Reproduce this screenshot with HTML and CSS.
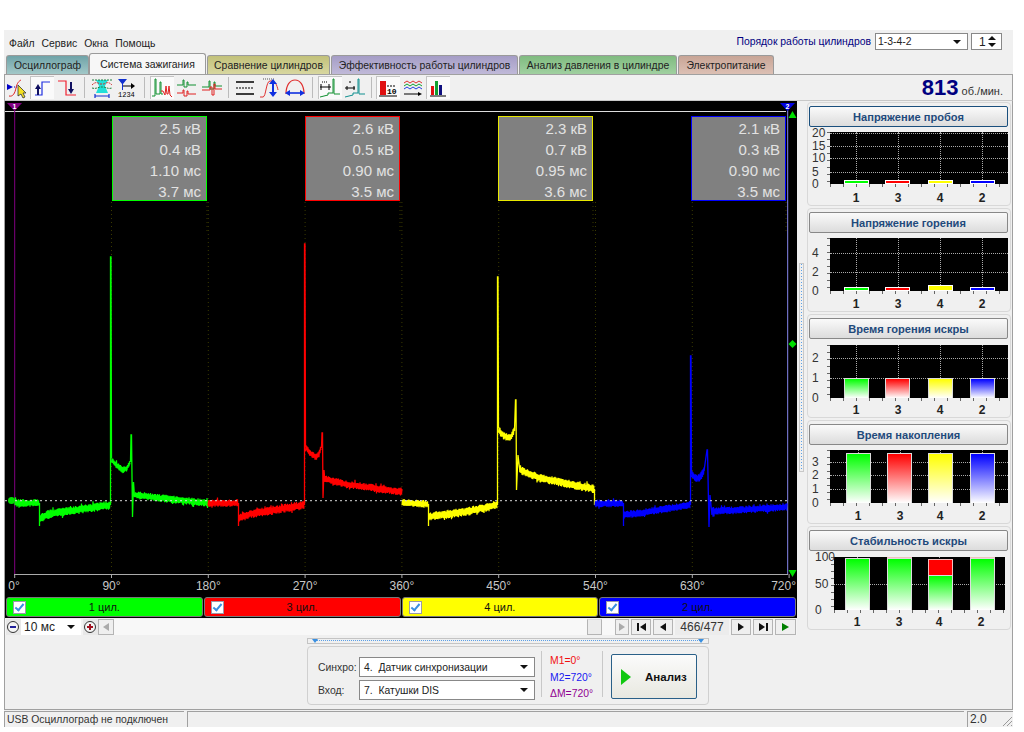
FILE: index.html

```html
<!DOCTYPE html>
<html lang="ru">
<head>
  <meta charset="UTF-8">
  <title>Система зажигания</title>
  <link rel="stylesheet" href="styles.css">
</head>

<body>
  <div class="app">
    <!-- Menu and firing order -->
    <div class="menuRow">
      <div class="menu">
        <span>Файл</span>
        <span>Сервис</span>
        <span>Окна</span>
        <span>Помощь</span>
      </div>
      <div class="orderBox">
        <span class="orderLabel">Порядок работы цилиндров</span>
        <div class="combo orderCombo"><span>1-3-4-2</span><i class="comboArrow"></i></div>
        <div class="combo orderSpin"><span>1</span><i class="spinUp"></i><i class="spinDown"></i></div>
      </div>
    </div>

    <div class="tabs">
      <div class="tab tabOsc">Осциллограф</div>
      <div class="tab tabActive">Система зажигания</div>
      <div class="tab tabCompare">Сравнение цилиндров</div>
      <div class="tab tabEff">Эффективность работы цилиндров</div>
      <div class="tab tabPress">Анализ давления в цилиндре</div>
      <div class="tab tabPower">Электропитание</div>
    </div>

    <div class="toolbar">
      <div class="tool tool1"><svg width="22" height="22" viewBox="0 0 22 22"><path d="M1 7l6 3-6 3z" fill="#0000c8"/><path d="M8 10h6" stroke="#0000c8" stroke-dasharray="1 1" fill="none"/><path d="M3 19c4 1 6-3 7-8s3-7 5-8" stroke="#e02020" fill="none"/><path d="M12 8l0 11 3-2 2 4 2-1-2-4 3 0z" fill="#f4e020" stroke="#333" stroke-width=".8"/></svg></div>
      <div class="tool toolOn tool2"><svg width="20" height="20" viewBox="0 0 20 20"><path d="M3 17h7V4h8" stroke="#2030e0" stroke-width="1.2" fill="none"/><path d="M6 6l3 5H7v6H5v-6H3z" fill="#101060"/></svg></div>
      <div class="tool tool3"><svg width="20" height="20" viewBox="0 0 20 20"><path d="M1 3h8v14h10" stroke="#f02030" stroke-width="1.2" fill="none"/><path d="M14 16l-3-5h2V4h2v7h2z" fill="#101060"/></svg></div>
      <i class="toolSep"></i>
      <div class="tool tool4"><svg width="22" height="22" viewBox="0 0 22 22"><path d="M5 3h12l-3 6 3 7H5l3-7z" fill="#20e0d8"/><path d="M1 8c3-3 5-3 8-1h4c3-2 5-2 8 1" stroke="#d03030" stroke-dasharray="2 1" fill="none"/><path d="M1 3h20M1 11c3 1 5 0 8-1h4c3 1 5 2 8 1" stroke="#208040" stroke-dasharray="2 1" fill="none"/><path d="M4 19h14M4 17v4M18 17v4" stroke="#1030d0" stroke-width="1.2"/></svg></div>
      <div class="tool tool5"><svg width="20" height="22" viewBox="0 0 20 22"><path d="M1 2h9L6 7v6H5V7z" fill="#1030d0"/><path d="M6 9h10" stroke="#000"/><path d="M14 6l4 3-4 3z" fill="#000"/><text x="1" y="20" class="iconText">1234</text></svg></div>
      <i class="toolSep"></i>
      <div class="tool toolOn tool6"><svg width="22" height="22" viewBox="0 0 22 22"><path d="M1 19h3V2h1v15h4V5h1v12h2" stroke="#109030" fill="none"/><path d="M10 14h2l2 4 1-9 1 8h1l1-8 1 9 2 2" stroke="#e02020" fill="none"/></svg></div>
      <div class="tool tool7"><svg width="22" height="22" viewBox="0 0 22 22"><path d="M1 8h6V3h1v7h3V5h1v3h8" stroke="#109030" fill="none"/><path d="M1 16h6v-3h1v6h3v-5h1v3h8" stroke="#e02020" fill="none"/></svg></div>
      <div class="tool tool8"><svg width="22" height="22" viewBox="0 0 22 22"><path d="M1 10h7V4h1v8h4V5h1v4h7" stroke="#109030" fill="none"/><path d="M1 13h8v-3h2v8h2V7h1v5h7" stroke="#e02020" fill="none"/></svg></div>
      <i class="toolSep toolSepTight"></i>
      <div class="tool tool9"><svg width="20" height="20" viewBox="0 0 20 20"><path d="M1 4h18M1 16h18" stroke="#000" stroke-width="1.3"/><path d="M1 10h18" stroke="#000" stroke-dasharray="2 1"/></svg></div>
      <div class="tool tool10"><svg width="22" height="22" viewBox="0 0 22 22"><path d="M1 20h3c3 0 3-16 7-16h2c3 0 5 4 6 9" stroke="#e03030" fill="none"/><path d="M4 2h12" stroke="#555" stroke-dasharray="1 1"/><path d="M14 2l4 5h-3v8h3l-4 5-4-5h3V7h-3z" fill="#1030e0"/></svg></div>
      <div class="tool tool11"><svg width="22" height="22" viewBox="0 0 22 22"><path d="M2 17C2 8 6 3 11 3s9 5 9 14" stroke="#e03030" stroke-width="1.2" fill="none"/><path d="M5 16h12" stroke="#1030e0" stroke-width="1.6"/><path d="M1 16l5-3v6zM21 16l-5-3v6z" fill="#1030e0"/></svg></div>
      <i class="toolSep"></i>
      <div class="tool toolOn tool12"><svg width="22" height="22" viewBox="0 0 22 22"><path d="M1 20l8-2v-2h5V2h1v15h6" stroke="#109030" fill="none"/><path d="M1 10h11" stroke="#000"/><path d="M2 7v6M10 7v6" stroke="#000"/><path d="M3 5h6" stroke="#000" stroke-dasharray="1 1"/></svg></div>
      <div class="tool tool13"><svg width="22" height="22" viewBox="0 0 22 22"><path d="M1 20l8-2v-2h5V2h1v15h6" stroke="#109090" fill="none"/><path d="M1 11h10" stroke="#000"/><path d="M6 4v2M3 9v4M10 9v4" stroke="#000"/></svg></div>
      <i class="toolSep toolSepTight"></i>
      <div class="tool toolOn tool14"><svg width="20" height="20" viewBox="0 0 20 20"><path d="M2 3h6v14H2z" fill="#e01010"/><path d="M1 18h18" stroke="#000"/><text x="9" y="16" class="iconText iconBold">10</text><path d="M9 8h9" stroke="#000" stroke-dasharray="2 1"/></svg></div>
      <div class="tool tool15"><svg width="20" height="20" viewBox="0 0 20 20"><path d="M1 5l3-2 3 2 3-2 3 2 3-2 3 2" stroke="#e03030" fill="none"/><path d="M1 8l3-2 3 2 3-2 3 2 3-2 3 2" stroke="#10a030" fill="none"/><path d="M1 11l3-2 3 2 3-2 3 2 3-2 3 2" stroke="#2040e0" fill="none"/><path d="M1 16h15" stroke="#000"/><path d="M15 14l4 2-4 2z" fill="#000"/></svg></div>
      <div class="tool toolOn tool16"><svg width="18" height="20" viewBox="0 0 18 20"><path d="M2 8h3v9H2z" fill="#e01010"/><path d="M6 3h3v14H6z" fill="#10a030"/><path d="M10 7h3v10h-3z" fill="#101080"/><path d="M1 18h16" stroke="#000"/></svg></div>
      <div class="rpm"><b>813</b> об./мин.</div>
    </div>

    <div class="workArea">
      <div class="scopeColumn">
        <!-- Oscillogram, trace drawn by script.js -->
        <div class="scope" id="scope">
          <svg class="scopeSvg" id="scopeSvg" width="792" height="495" viewBox="5 101 792 495"></svg>
        </div>

        <div class="cylinders">
          <label class="cyl cylGreen"><i class="check"></i><span>1 цил.</span></label>
          <label class="cyl cylRed"><i class="check"></i><span>3 цил.</span></label>
          <label class="cyl cylYellow"><i class="check"></i><span>4 цил.</span></label>
          <label class="cyl cylBlue"><i class="check"></i><span>2 цил.</span></label>
        </div>

        <div class="navRow">
          <div class="zoomBtn zoomMinus"></div>
          <div class="combo zoomCombo"><span>10 мс</span><i class="comboArrow"></i></div>
          <div class="zoomBtn zoomPlus"></div>
          <div class="navBtn navGrey"><i class="triLeft triGrey"></i></div>
          <div class="navTrack"></div>
          <div class="navThumb"></div>
          <div class="navGap"></div>
          <div class="navBtn navArrowRight"><i class="triRight triGrey"></i></div>
          <div class="navBtn navWide"><i class="barLeft"></i><i class="triLeft"></i></div>
          <div class="navBtn navWide"><i class="triLeft"></i></div>
          <div class="navCount">466/477</div>
          <div class="navBtn navWide"><i class="triRight"></i></div>
          <div class="navBtn navWide"><i class="triRight"></i><i class="barRight"></i></div>
          <div class="navBtn navWide navPlay"><i class="triRight triGreen"></i></div>
        </div>
      </div>

      <div class="splitter"><i class="dots"></i></div>

      <div class="charts" id="charts"></div>
    </div>

    <div class="bottomArea">
      <div class="analysisWrap">
        <div class="collapseBar"><i class="dotsH"></i><i class="miniTri miniLeft"></i><i class="miniTri miniRight"></i></div>
        <div class="analysisBox">
          <div class="fields">
            <div class="fieldRow">
              <span class="fieldLabel">Синхро:</span>
              <div class="combo fieldCombo"><span>4.&nbsp; Датчик синхронизации</span><i class="comboArrow"></i></div>
            </div>
            <div class="fieldRow">
              <span class="fieldLabel">Вход:</span>
              <div class="combo fieldCombo"><span>7.&nbsp; Катушки DIS</span><i class="comboArrow"></i></div>
            </div>
          </div>
          <div class="markers">
            <span class="m1">M1=0°</span>
            <span class="m2">M2=720°</span>
            <span class="m3">ΔM=720°</span>
          </div>
          <div class="analyzeBtn"><i class="playBig"></i><b>Анализ</b></div>
        </div>
      </div>
    </div>

    <div class="statusBar">
      <div class="statusCell statusText">USB Осциллограф не подключен</div>
      <div class="statusCell statusFill"></div>
      <div class="statusCell statusVer">2.0</div>
      <svg class="grip" width="12" height="12" viewBox="0 0 12 12"><path d="M11 2L2 11M11 6l-5 5M11 10l-1 1" stroke="#999" fill="none"/></svg>
    </div>
  </div>

  <script src="script.js"></script>
</body>
</html>
```

FILE: styles.css

```css
html, body {
  margin: 0;
  background: #fff;
}
body {
  font-family: "Liberation Sans", Arial, sans-serif;
  font-size: 10.4px;
  color: #222;
}
.app {
  width: 1009px;
  height: 697px;
  margin: 30px 0 0 4px;
  background: #f0f0f0;
  display: flex;
  flex-direction: column;
}

/* top menu */
.menuRow {
  height: 23px;
  display: flex;
  justify-content: space-between;
  padding: 3px 11px 0 5px;
  box-sizing: border-box;
}
.menu {
  display: flex;
  gap: 7px;
  align-items: center;
  height: 20px;
}
.orderBox {
  display: flex;
  align-items: center;
  height: 17px;
}
.orderLabel {
  color: #000080;
  margin-right: 4px;
}
.combo {
  background: #fff;
  border: 1px solid #888;
  box-sizing: border-box;
  display: flex;
  align-items: center;
  position: relative;
  padding-left: 4px;
  color: #222;
}
.comboArrow {
  position: absolute;
  right: 6px;
  top: 50%;
  margin-top: -2px;
  border-left: 4px solid transparent;
  border-right: 4px solid transparent;
  border-top: 4px solid #111;
}
.orderCombo {
  width: 93px;
  height: 17px;
  padding-left: 2px;
}
.orderSpin {
  width: 31px;
  height: 17px;
  margin-left: 3px;
  padding-left: 7px;
  font-size: 12px;
}
.spinUp, .spinDown {
  position: absolute;
  right: 5px;
  border-left: 4px solid transparent;
  border-right: 4px solid transparent;
}
.spinUp {
  top: 2px;
  border-bottom: 4px solid #111;
}
.spinDown {
  bottom: 2px;
  border-top: 4px solid #111;
}

/* tabs */
.tabs {
  height: 21px;
  display: flex;
  align-items: flex-end;
  padding-left: 2px;
  gap: 1px;
  box-sizing: border-box;
}
.tab {
  height: 19px;
  box-sizing: border-box;
  border: 1px solid #9a9a9a;
  border-bottom: 0;
  border-radius: 3px 3px 0 0;
  display: flex;
  align-items: center;
  justify-content: center;
}
.tabOsc { width: 83px; background: linear-gradient(#6fa3a8, #a2c8c8); }
.tabActive { width: 117px; height: 21px; background: #f7f7f7; margin: 0 0 0 -1px; }
.tabCompare { width: 123px; background: linear-gradient(#c2c17a, #d8d7a0); }
.tabEff { width: 187px; background: linear-gradient(#a59dc6, #c0b9d8); }
.tabPress { width: 158px; background: linear-gradient(#80bb80, #a0d0a0); }
.tabPower { width: 96px; background: linear-gradient(#c8a596, #dcc0b4); }

/* toolbar */
.toolbar {
  height: 26px;
  border-top: 1px solid #a0a0a0;
  border-left: 1px solid #a0a0a0;
  border-right: 1px solid #a0a0a0;
  box-sizing: border-box;
  display: flex;
  align-items: center;
  gap: 1px;
  background: #f0f0f0;
}
.tool {
  height: 23px;
  width: 24px;
  display: flex;
  align-items: center;
  justify-content: center;
  flex: none;
}
.toolOn {
  background: #fafafa;
  box-shadow: inset 1px 1px 0 #c4c4c4;
}
.toolSep {
  width: 1px;
  height: 21px;
  background: #bbb;
  margin: 0 4px;
}
.toolSepTight {
  margin: 0 3px;
}
.iconText {
  font: 7px "Liberation Mono", monospace;
  fill: #000;
}
.iconBold {
  font-weight: bold;
  font-size: 8px;
}
.rpm {
  margin-left: auto;
  margin-right: 9px;
  font-size: 11px;
  color: #333;
}
.rpm b {
  font-size: 22px;
  color: #000080;
  line-height: 22px;
}

/* scope and side charts */
.workArea {
  display: flex;
  height: 535px;
  border-left: 1px solid #a0a0a0;
  border-right: 1px solid #a0a0a0;
  box-sizing: border-box;
  border-top: 1px solid #c8c8c8;
}
.scopeColumn {
  width: 792px;
  display: flex;
  flex-direction: column;
}
.scope {
  height: 495px;
  background: #000;
  position: relative;
  flex: none;
}
.scopeSvg {
  display: block;
}
.infoBox {
  position: absolute;
  top: 15px;
  width: 95px;
  height: 85px;
  box-sizing: border-box;
  background: #808080;
  border: 1px solid;
  color: #e2e2e2;
  font-size: 15px;
  line-height: 21px;
  text-align: right;
  padding: 1px 5px 0 0;
}
.angle {
  position: absolute;
  top: 478px;
  color: #c8c8c8;
  font-size: 12px;
  transform: translateX(-50%);
}
.angleLast {
  transform: translateX(-100%);
}
.cylinders {
  background: #000;
  display: flex;
  gap: 1px;
  padding: 1px 1px 1px 1px;
  height: 22px;
  box-sizing: border-box;
  flex: none;
}
.cyl {
  flex: 1;
  height: 20px;
  border: 1px solid #777;
  border-radius: 3px;
  box-sizing: border-box;
  display: flex;
  align-items: center;
  justify-content: center;
  position: relative;
  color: #111;
  font-size: 11px;
}
.cylGreen { background: #00ff00; }
.cylRed { background: #ff0000; }
.cylYellow { background: #ffff00; }
.cylBlue { background: #0000ff; }
.check {
  position: absolute;
  left: 6px;
  top: 3px;
  width: 11px;
  height: 11px;
  background: #fff;
  border: 1px solid #99a;
}
.check::after {
  content: "";
  position: absolute;
  left: 3px;
  top: 0;
  width: 3px;
  height: 7px;
  border-right: 2px solid #3a8fe0;
  border-bottom: 2px solid #3a8fe0;
  transform: rotate(40deg);
}
.navRow {
  height: 16px;
  display: flex;
  align-items: stretch;
  margin-top: 1px;
  background: #f4f4f4;
  flex: none;
}
.zoomBtn {
  width: 15px;
  position: relative;
  background: #e8e8e8;
  margin-left: 1px;
}
.zoomBtn::before {
  content: "";
  position: absolute;
  left: 1px;
  top: 2px;
  width: 10px;
  height: 10px;
  border: 1px solid #333;
  border-radius: 50%;
  background: #f4f4f4;
}
.zoomBtn::after {
  content: "";
  position: absolute;
  left: 4px;
  top: 7px;
  width: 6px;
  height: 2px;
  background: #20209a;
}
.zoomPlus {
  margin-left: 2px;
}
.zoomPlus::after {
  left: 4px;
  top: 5px;
  width: 6px;
  height: 6px;
  background:
    linear-gradient(#a01020, #a01020) center / 6px 2px no-repeat,
    linear-gradient(#a01020, #a01020) center / 2px 6px no-repeat;
}
.zoomCombo {
  width: 60px;
  border: 0;
  font-size: 12px;
  padding-left: 3px;
}
.navBtn {
  display: flex;
  align-items: center;
  justify-content: center;
  gap: 1px;
  background: #efefef;
  border: 1px solid #b4b4b4;
  box-sizing: border-box;
  flex: none;
}
.navGrey {
  width: 16px;
}
.navTrack {
  width: 473px;
  background: #f8f8f8;
}
.navThumb {
  width: 15px;
  background: #ececec;
  border: 1px solid #b4b4b4;
  border-top-color: #ddd;
  box-sizing: border-box;
}
.navGap {
  width: 13px;
  background: #f8f8f8;
}
.navArrowRight {
  width: 14px;
}
.navWide {
  width: 20px;
  margin-left: 2px;
}
.navPlay {
  width: 21px;
}
.navCount {
  width: 54px;
  margin-left: 2px;
  display: flex;
  align-items: center;
  justify-content: center;
  font-size: 12px;
  color: #333;
  background: #ececec;
}
.triLeft, .triRight {
  border-top: 4px solid transparent;
  border-bottom: 4px solid transparent;
}
.triLeft { border-right: 6px solid #111; }
.triRight { border-left: 6px solid #111; }
.triLeft.triGrey { border-right-color: #aaa; }
.triRight.triGrey { border-left-color: #aaa; }
.triRight.triGreen { border-left: 7px solid #008000; }
.barLeft, .barRight {
  width: 2px;
  height: 8px;
  background: #111;
}
.splitter {
  width: 8px;
  position: relative;
}
.dots {
  position: absolute;
  left: 2px;
  top: 162px;
  width: 3px;
  height: 207px;
  border: 1px solid #c8c8c8;
  background: repeating-linear-gradient(#5aa0e8 0 1px, transparent 1px 3px) center / 1px 100% no-repeat;
}
.charts {
  width: 204px;
  padding-left: 2px;
  padding-top: 1px;
  display: flex;
  flex-direction: column;
  gap: 2px;
}
.panel {
  height: 104px;
  width: 204px;
  box-sizing: border-box;
  border: 1px solid #d8d8d8;
  border-radius: 4px;
  padding: 3px 2px 0 1px;
  flex: none;
}
.panelButton {
  height: 21px;
  box-sizing: border-box;
  border: 1px solid #888;
  border-radius: 2px;
  background: linear-gradient(#fafafa, #dcdcdc);
  color: #1f4a7c;
  font-weight: bold;
  font-size: 11.1px;
  display: flex;
  align-items: center;
  justify-content: center;
}
.panelButtonFocus {
  border-color: #1a4f7d;
}
.chartBody {
  position: relative;
  height: 72px;
}
.plot {
  position: absolute;
  background: #000;
}
/* axis ticks under and left of the plot */
.plot::before {
  content: "";
  position: absolute;
  left: 0;
  right: 0;
  bottom: -3px;
  height: 3px;
  background: repeating-linear-gradient(90deg, #666 0 1px, transparent 1px 13px);
}
.plot::after {
  content: "";
  position: absolute;
  left: -3px;
  top: 0;
  bottom: 0;
  width: 3px;
  background: repeating-linear-gradient(#666 0 1px, transparent 1px 7px);
}
.yLabel {
  position: absolute;
  font-size: 12px;
  color: #333;
  line-height: 12px;
}
.xLabel {
  position: absolute;
  font-size: 12px;
  font-weight: bold;
  color: #222;
  transform: translateX(-50%);
  top: 64px;
}
.gridH {
  position: absolute;
  left: 0;
  right: 0;
  border-top: 1px dotted #aaa;
}
.gridV {
  position: absolute;
  top: 0;
  bottom: 0;
  border-left: 1px dotted #aaa;
}
.bar {
  position: absolute;
  bottom: 0;
  box-sizing: border-box;
  border: 1px solid #ddd;
  border-bottom: 0;
}
.bar-green { background: linear-gradient(#00ff00, #fff); }
.bar-red { background: linear-gradient(#ff0000, #fff); }
.bar-yellow { background: linear-gradient(#ffff00, #fff); }
.bar-blue { background: linear-gradient(#0000ff, #fff); }
.barThin {
  border: 1px solid #fff;
}
.barThin.bar-green { background: #00ff00; }
.barThin.bar-red { background: #ff0000; }
.barThin.bar-yellow { background: #ffff00; }
.barThin.bar-blue { background: #0000ff; }
.barFail {
  background: #ff0000;
  border: 1px solid #f4c0c0;
  border-bottom: 0;
}

/* analysis panel */
.bottomArea {
  height: 75px;
  border: 1px solid #a0a0a0;
  border-top: 0;
  box-sizing: border-box;
  padding-left: 302px;
}
.analysisWrap {
  width: 402px;
}
.collapseBar {
  height: 6px;
  margin-top: 3px;
  border: 1px solid #c4c4c4;
  position: relative;
  box-sizing: border-box;
}
.dotsH {
  position: absolute;
  left: 8px;
  right: 8px;
  top: 1px;
  border-top: 1px dotted #5aa0e8;
}
.miniTri {
  position: absolute;
  top: 0;
  border-left: 3px solid transparent;
  border-right: 3px solid transparent;
  border-top: 4px solid #3a8fe0;
}
.miniLeft { left: 4px; }
.miniRight { right: 4px; }
.analysisBox {
  margin-top: 2px;
  height: 59px;
  box-sizing: border-box;
  border: 1px solid #d0d0d0;
  border-radius: 4px;
  display: flex;
  align-items: flex-start;
  padding-left: 10px;
}
.fields {
  display: flex;
  flex-direction: column;
  gap: 3px;
  margin-top: 10px;
}
.fieldRow {
  display: flex;
  align-items: center;
}
.fieldLabel {
  width: 41px;
  color: #333;
}
.fieldCombo {
  width: 176px;
  height: 20px;
  padding-left: 4px;
}
.markers {
  margin: 4px 0 0 6px;
  width: 62px;
  height: 46px;
  box-sizing: border-box;
  padding: 2px 0 0 8px;
  border-left: 1px solid #c8c8c8;
  border-right: 1px solid #c8c8c8;
}
.markers span {
  display: block;
  line-height: 16.5px;
}
.m1 { color: #f01010; }
.m2 { color: #1818f0; }
.m3 { color: #900090; }
.analyzeBtn {
  margin: 7px 0 0 8px;
  width: 86px;
  height: 45px;
  box-sizing: border-box;
  border: 1px solid #2a6088;
  border-radius: 2px;
  background: linear-gradient(#fbfbfb, #e8e8e0);
  display: flex;
  align-items: center;
  padding-left: 9px;
  color: #111;
  font-size: 11.5px;
}
.playBig {
  border-top: 8px solid transparent;
  border-bottom: 8px solid transparent;
  border-left: 10px solid #10c810;
  margin-right: 14px;
}

/* status bar */
.statusBar {
  height: 17px;
  display: flex;
  position: relative;
  gap: 3px;
  padding-top: 1px;
  box-sizing: border-box;
}
.statusCell {
  border-top: 1px solid #a0a0a0;
  border-left: 1px solid #a0a0a0;
  box-sizing: border-box;
  padding-left: 2px;
  line-height: 15px;
  color: #333;
}
.statusText { width: 180px; }
.statusFill { flex: 1; }
.statusVer { width: 46px; font-size: 12px; }
.grip {
  position: absolute;
  right: 0;
  bottom: 0;
}
```

FILE: script.js

```js
// --- Scope trace ---
const svg = document.getElementById('scopeSvg');
const scope = document.getElementById('scope');
const NS = 'http://www.w3.org/2000/svg';
const OFFSET_X = 5;

let seed = 12345;
function rnd() {
  seed = (seed * 16807) % 2147483647;
  return seed / 2147483647;
}

function add(tag, attrs) {
  const el = document.createElementNS(NS, tag);
  for (const k in attrs) el.setAttribute(k, attrs[k]);
  svg.appendChild(el);
  return el;
}

// zigzag along the points, looks like signal noise
function noisy(points, amp) {
  let d = '';
  let up = false;
  for (let i = 0; i < points.length - 1; i++) {
    const [x0, y0] = points[i];
    const [x1, y1] = points[i + 1];
    for (let x = x0; x <= x1; x += 0.5) {
      const y = y0 + (y1 - y0) * (x - x0) / (x1 - x0);
      up = !up;
      let n = amp * (0.6 + rnd() * 0.5);
      if (rnd() < 0.04) n += 2; // odd peak
      d += (d ? 'L' : 'M') + x + ' ' + (y + (up ? n : -n)).toFixed(1);
    }
  }
  return d;
}

function line(points) {
  return 'M' + points.map(p => p.join(' ')).join('L');
}

const ticks = [];
for (let i = 0; i <= 8; i++) ticks.push(14.7 + 96.8 * i);

// dark vertical grid, starts below the boxes
ticks.slice(1, 8).forEach(x => {
  add('path', { d: line([[x, 202], [x, 574]]), stroke: '#3a3a00', 'stroke-dasharray': '1 3', fill: 'none' });
});
[207, 400, 593, 786].forEach(x => {
  add('path', { d: line([[x, 202], [x, 232]]), stroke: '#3a3a00', 'stroke-dasharray': '1 3', fill: 'none' });
});

add('path', { d: line([[5, 111.5], [786, 111.5]]), stroke: '#ddd', fill: 'none' });
add('path', { d: line([[14, 574.5], [788, 574.5]]), stroke: '#aaa', fill: 'none' });
ticks.forEach(x => add('path', { d: line([[x, 574], [x, 578]]), stroke: '#aaa', fill: 'none' }));

add('path', { d: line([[14.7, 104], [14.7, 574]]), stroke: '#800080', fill: 'none' });
add('path', { d: line([[787.7, 104], [787.7, 574]]), stroke: '#8888ee', fill: 'none' });

const traces = [
  { color: '#00ff00', noise: [
      [[15, 503], [39, 503]], [[40, 518], [50, 514], [70, 511], [90, 508], [110, 505]],
      [[111.5, 460], [116, 465], [123, 470], [127, 468], [130, 462]],
      [[135, 495], [160, 498], [208, 503]] ],
    amps: [3.5, 4, 3, 3.5],
    lines: [
      [[39.5, 503], [39.5, 526]],
      [[110.5, 505], [110.5, 257], [111, 257], [111.5, 458]],
      [[130.5, 462], [131, 435], [131.5, 435], [132.5, 517], [133.5, 482], [134.5, 497]] ] },
  { color: '#ff0000', noise: [
      [[208, 503], [238, 503]], [[239, 518], [250, 514], [275, 510], [304, 505]],
      [[305.5, 447], [310, 453], [316, 457], [319, 454], [321, 448]],
      [[325, 479], [345, 484], [402, 492]] ],
    amps: [3.5, 4, 3, 3.5],
    lines: [
      [[238.5, 503], [238.5, 526]],
      [[304.5, 505], [304.5, 244], [305, 244], [305.5, 447]],
      [[321.5, 448], [322, 433], [322.5, 433], [323, 498], [324, 470], [325, 482]] ] },
  { color: '#ffff00', noise: [
      [[402, 503], [428, 504]], [[429, 517], [440, 515], [465, 512], [497, 505]],
      [[498.5, 430], [504, 436], [510, 438], [514, 431]],
      [[520, 470], [540, 478], [594, 489]] ],
    amps: [3.5, 4, 3.5, 4],
    lines: [
      [[428.5, 504], [428.5, 526]],
      [[497.5, 505], [497.5, 277], [498, 277], [498.5, 428]],
      [[514.5, 431], [515.5, 400], [516, 400], [516.5, 490], [518, 455], [520, 472]],
      [[594.5, 489], [594.5, 505]] ] },
  { color: '#0000ff', noise: [
      [[595, 503.5], [623, 503.5]], [[624, 515], [640, 513], [665, 509], [690, 505]],
      [[691.5, 474], [695, 478], [699, 478], [704, 471]],
      [[712, 511], [740, 510], [787, 507]] ],
    amps: [3.5, 3.5, 3.5, 3.5],
    lines: [
      [[623.5, 503], [623.5, 526]],
      [[690.5, 505], [690.5, 356], [691, 356], [691.5, 474]],
      [[704, 471], [707, 450], [707.5, 450], [709, 527], [710, 495], [712, 515]] ] }
];

traces.forEach(t => {
  t.noise.forEach((pts, i) => {
    add('path', { d: noisy(pts, t.amps[i]), stroke: t.color, fill: 'none', 'stroke-width': 1.2 });
  });
  t.lines.forEach(pts => {
    add('path', { d: line(pts), stroke: t.color, fill: 'none', 'stroke-width': 1.3 });
  });
});

// zero line runs over the traces
add('path', { d: line([[5, 500.7], [787, 500.7]]), stroke: '#d8d8d8', 'stroke-dasharray': '2 3', fill: 'none' });

// markers
add('circle', { cx: 11.5, cy: 500.5, r: 3.5, fill: '#00e000' });
add('path', { d: 'M7 103h15l-7.5 8z', fill: '#800080' });
add('path', { d: 'M780 103h15l-7.5 8z', fill: '#0000e0' });
add('path', { d: 'M792.5 111l4 7h-8z', fill: '#00e000' });
add('path', { d: 'M792.5 577l4-7h-8z', fill: '#00e000' });
add('path', { d: 'M792.5 340l4 4-4 4-4-4z', fill: '#00e000' });
[['1', 14.5], ['2', 787.5]].forEach(m => {
  const t = add('text', { x: m[1], y: 108.5, fill: '#fff', 'font-size': 7, 'font-weight': 'bold', 'text-anchor': 'middle', 'font-family': 'Liberation Sans' });
  t.textContent = m[0];
});

// measurement boxes
const boxes = [
  { left: 107, color: '#00ff00', rows: ['2.5 кВ', '0.4 кВ', '1.10 мс', '3.7 мс'] },
  { left: 300, color: '#ff0000', rows: ['2.6 кВ', '0.5 кВ', '0.90 мс', '3.5 мс'] },
  { left: 493, color: '#e8e800', rows: ['2.3 кВ', '0.7 кВ', '0.95 мс', '3.6 мс'] },
  { left: 686, color: '#0000ff', rows: ['2.1 кВ', '0.3 кВ', '0.90 мс', '3.5 мс'] }
];
boxes.forEach(b => {
  const box = document.createElement('div');
  box.className = 'infoBox';
  box.style.left = b.left + 'px';
  box.style.borderColor = b.color;
  b.rows.forEach(r => {
    const row = document.createElement('div');
    row.textContent = r;
    box.appendChild(row);
  });
  scope.appendChild(box);
});

// degree labels
ticks.forEach((x, i) => {
  const lab = document.createElement('div');
  lab.className = i === 8 ? 'angle angleLast' : 'angle';
  lab.textContent = (i * 90) + '°';
  lab.style.left = (i === 8 ? 791 : i === 0 ? 9 : x - OFFSET_X) + 'px';
  scope.appendChild(lab);
});

// --- Side charts ---
const COLORS = ['green', 'red', 'yellow', 'blue'];
const NAMES = ['1', '3', '4', '2'];
const charts = [
  { title: 'Напряжение пробоя', focus: true, top: 5, height: 52, yTicks: [[20, 1], [15, 14], [10, 26], [5, 40], [0, 52]], bars: [4, 4, 4, 4], thin: true, xs: [855, 897, 939, 981], barX: [843, 884, 927, 969] },
  { title: 'Напряжение горения', top: 5, height: 53, yTicks: [[4, 15], [2, 34], [0, 53]], bars: [4, 4, 6, 4], thin: true, xs: [855, 897, 939, 981], barX: [843, 884, 927, 969] },
  { title: 'Время горения искры', top: 6, height: 53, yTicks: [[2, 13], [1, 33], [0, 53]], bars: [20, 20, 20, 20], xs: [855, 897, 939, 981], barX: [843, 884, 927, 969] },
  { title: 'Время накопления', top: 5, height: 53, yTicks: [[3, 12], [2, 25], [1, 39], [0, 53]], bars: [50, 50, 50, 50], xs: [857, 899, 939, 981], barX: [845, 886, 927, 969] },
  { title: 'Стабильность искры', top: 6, height: 53, left: 833, right: 1004, labelX: 814, single: 'green', yTicks: [[100, 0], [50, 27], [0, 53]], bars: [52, 52, 35, 52], fail: [0, 1, 16, 1], xs: [856, 898, 938, 980], barX: [844, 886, 927, 969] }
];

const chartsEl = document.getElementById('charts');
const PANEL_X = 808;

function div(cls, parent, text) {
  const el = document.createElement('div');
  el.className = cls;
  if (text !== undefined) el.textContent = text;
  parent.appendChild(el);
  return el;
}

charts.forEach(c => {
  const panel = div('panel', chartsEl);
  div('panelButton' + (c.focus ? ' panelButtonFocus' : ''), panel, c.title);
  const body = div('chartBody', panel);
  const left = (c.left || 829) - PANEL_X;
  const right = (c.right || 1007) - PANEL_X;
  const plot = div('plot', body);
  plot.style.left = left + 'px';
  plot.style.width = (right - left) + 'px';
  plot.style.top = c.top + 'px';
  plot.style.height = c.height + 'px';

  c.yTicks.forEach(t => {
    if (t[1] > 0 && t[1] < c.height) {
      const g = div('gridH', plot);
      g.style.top = t[1] + 'px';
    }
    const lab = div('yLabel', body, t[0]);
    lab.style.left = ((c.labelX || 811) - PANEL_X) + 'px';
    lab.style.top = (c.top + t[1] - 6) + 'px';
  });

  c.xs.forEach((x, i) => {
    const g = div('gridV', plot);
    g.style.left = (x - PANEL_X - left) + 'px';
    const color = c.single || COLORS[i];
    const bar = div('bar bar-' + color + (c.thin ? ' barThin' : ''), plot);
    const barLeft = (c.barX[i] - PANEL_X - left) + 'px';
    bar.style.left = barLeft;
    bar.style.width = '25px';
    bar.style.height = c.bars[i] + 'px';
    if (c.fail && c.fail[i]) {
      const top = div('bar barFail', plot);
      top.style.left = barLeft;
      top.style.width = '25px';
      top.style.height = c.fail[i] + 'px';
      top.style.bottom = c.bars[i] + 'px';
    }
    const lab = div('xLabel', body, NAMES[i]);
    lab.style.left = (x - PANEL_X) + 'px';
  });
});
```
